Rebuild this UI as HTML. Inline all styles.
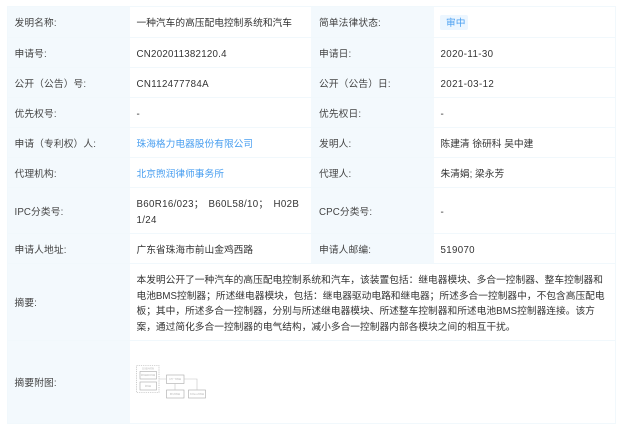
<!DOCTYPE html>
<html lang="zh"><head><meta charset="utf-8"><style>
html,body{margin:0;padding:0;background:#fff;width:620px;height:427px;overflow:hidden}
body{position:relative;font-family:"Liberation Sans","Noto Sans CJK SC",sans-serif;font-size:9.72px;color:#333}
#w{position:absolute;left:0;top:0;width:620px;height:427px;filter:blur(.3px)}
.b{position:absolute}
.t{position:absolute;white-space:nowrap;line-height:15.5px;height:15.5px;margin-top:1.5px}
.l{color:#444;letter-spacing:.12px}
.n{letter-spacing:.33px}
a{color:#4a9ff0;text-decoration:none}
.h{position:absolute;left:7px;width:609px;height:1px;background:#f1f8fc}
</style></head><body><div id="w">
<div class="b" style="left:7px;top:6px;width:123px;height:418px;background:#f3f9fd"></div>
<div class="b" style="left:311px;top:6px;width:123px;height:257px;background:#f3f9fd"></div>
<div class="b" style="left:615px;top:6px;width:1px;height:418px;background:#f1f8fc"></div>
<div class="b" style="left:7px;top:6px;width:1px;height:418px;background:#f1f8fc"></div>
<div class="h" style="top:6px"></div>
<div class="h" style="top:37px"></div>
<div class="h" style="top:67px"></div>
<div class="h" style="top:97px"></div>
<div class="h" style="top:127px"></div>
<div class="h" style="top:157px"></div>
<div class="h" style="top:187px"></div>
<div class="h" style="top:233px"></div>
<div class="h" style="top:263px"></div>
<div class="h" style="top:340px"></div>
<div class="h" style="top:423px"></div>

<div class="t l" style="left:14.5px;top:14.5px">发明名称:</div>
<div class="t" style="left:136.5px;top:14.5px">一种汽车的高压配电控制系统和汽车</div>
<div class="t l" style="left:319px;top:14.5px">简单法律状态:</div>
<div class="b" style="left:440px;top:15px;width:28px;height:15px;background:#ecf6ff;border-radius:2px"></div>
<div class="t" style="left:446px;top:14.5px;color:#4a9ff0">审中</div>

<div class="t l" style="left:14.5px;top:45px">申请号:</div>
<div class="t n" style="left:136.5px;top:45px;letter-spacing:.25px">CN202011382120.4</div>
<div class="t l" style="left:319px;top:45px">申请日:</div>
<div class="t n" style="left:440.5px;top:45px;letter-spacing:.4px">2020-11-30</div>

<div class="t l" style="left:14.5px;top:75px">公开（公告）号:</div>
<div class="t n" style="left:136.5px;top:75px">CN112477784A</div>
<div class="t l" style="left:319px;top:75px">公开（公告）日:</div>
<div class="t n" style="left:440.5px;top:75px;letter-spacing:.4px">2021-03-12</div>

<div class="t l" style="left:14.5px;top:105px">优先权号:</div>
<div class="t" style="left:136.5px;top:105px">-</div>
<div class="t l" style="left:319px;top:105px">优先权日:</div>
<div class="t" style="left:440.5px;top:105px">-</div>

<div class="t l" style="left:14.5px;top:135px">申请（专利权）人:</div>
<div class="t" style="left:136.5px;top:135px"><a>珠海格力电器股份有限公司</a></div>
<div class="t l" style="left:319px;top:135px">发明人:</div>
<div class="t" style="left:440.5px;top:135px">陈建清 徐研科 吴中建</div>

<div class="t l" style="left:14.5px;top:165px">代理机构:</div>
<div class="t" style="left:136.5px;top:165px"><a>北京煦润律师事务所</a></div>
<div class="t l" style="left:319px;top:165px">代理人:</div>
<div class="t" style="left:440.5px;top:165px">朱清娟; 梁永芳</div>

<div class="t l" style="left:14.5px;top:203px">IPC分类号:</div>
<div class="t n" style="left:136.5px;top:195px">B60R16/023；</div>
<div class="t n" style="left:208.5px;top:195px">B60L58/10；</div>
<div class="t n" style="left:273.5px;top:195px">H02B</div>
<div class="t n" style="left:136.5px;top:211px">1/24</div>
<div class="t l" style="left:319px;top:203px">CPC分类号:</div>
<div class="t" style="left:440.5px;top:203px">-</div>

<div class="t l" style="left:14.5px;top:241px">申请人地址:</div>
<div class="t" style="left:136.5px;top:241px">广东省珠海市前山金鸡西路</div>
<div class="t l" style="left:319px;top:241px">申请人邮编:</div>
<div class="t n" style="left:440.5px;top:241px">519070</div>

<div class="t l" style="left:14.5px;top:294px">摘要:</div>
<div class="t" style="left:136.5px;top:271.5px">本发明公开了一种汽车的高压配电控制系统和汽车，该装置包括：继电器模块、多合一控制器、整车控制器和</div>
<div class="t" style="left:136.5px;top:287px">电池BMS控制器；所述继电器模块，包括：继电器驱动电路和继电器；所述多合一控制器中，不包含高压配电</div>
<div class="t" style="left:136.5px;top:302.5px">板；其中，所述多合一控制器，分别与所述继电器模块、所述整车控制器和所述电池BMS控制器连接。该方</div>
<div class="t" style="left:136.5px;top:318.5px">案，通过简化多合一控制器的电气结构，减小多合一控制器内部各模块之间的相互干扰。</div>

<div class="t l" style="left:14.5px;top:374px">摘要附图:</div>
<svg class="b" style="left:130px;top:360px" width="85" height="45" viewBox="130 360 85 45" fill="none" stroke="#a8a8a8" stroke-width=".6">
<rect x="136.5" y="365.5" width="22.5" height="27" stroke-dasharray="1.2 1"/>
<rect x="140" y="371.5" width="16.5" height="7.5"/>
<rect x="140" y="382" width="16.5" height="8"/>
<rect x="166.5" y="375" width="17.5" height="8.5"/>
<rect x="166.5" y="390" width="17.5" height="8"/>
<rect x="188.5" y="390" width="17" height="8"/>
<path d="M159 379H166.5M184 379H197V390M175 383.5V390" stroke="#c4c4c4"/>
<g fill="#b8b8b8" stroke="none" font-size="2" font-family="'Noto Sans CJK SC',sans-serif" text-anchor="middle">
<text x="148" y="369.5">高压配电控制</text>
<text x="148" y="375.8">继电器驱动电路</text>
<text x="148" y="386.8">继电器</text>
<text x="175" y="380">多合一控制器</text>
<text x="175" y="394.8">整车控制器</text>
<text x="197" y="394.8">电池BMS控制器</text>
</g>
</svg>
</div></body></html>
